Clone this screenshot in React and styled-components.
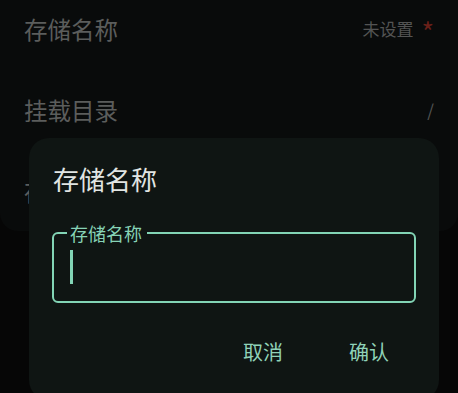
import React from "react";
import styled, { createGlobalStyle } from "styled-components";

const Global = createGlobalStyle`
  html, body { margin: 0; padding: 0; background: #080909; }
  body { font-family: "Noto Sans CJK SC", "Noto Sans", sans-serif; overflow: hidden; }
  * { box-sizing: border-box; }
`;

const Page = styled.div`
  width: 458px;
  height: 393px;
  position: relative;
  overflow: hidden;
  background: #080909;
`;

const Card = styled.div`
  margin-top: -12px;
  background: #0d0f0f;
  border-radius: 0 0 18px 18px;
  display: flex;
  flex-direction: column;
`;

const Row = styled.div`
  height: 81px;
  padding: 0 24px;
  display: flex;
  align-items: center;
  justify-content: space-between;
`;

const RowLabel = styled.span`
  font-size: 23.5px;
  color: #7a7c7b;
`;

const RowValue = styled.span`
  font-size: 17px;
  color: #6f7170;
  display: flex;
  align-items: center;
  gap: 8px;
`;

const Star = styled.span`
  color: #8e2b22;
  font-size: 27px;
  line-height: 1;
  margin-top: 6px;
`;

const Scrim = styled.div`
  position: absolute;
  inset: 0;
  background: rgba(0, 0, 0, 0.25);
`;

const Dialog = styled.div`
  position: absolute;
  left: 29px;
  top: 138px;
  width: 410px;
  height: 262px;
  background: #0f1513;
  border-radius: 20px;
  padding: 22px 23px 0 23px;
  display: flex;
  flex-direction: column;
`;

const Title = styled.div`
  font-size: 26px;
  color: #e1e5e3;
  line-height: 38px;
  padding-left: 1px;
`;

const Field = styled.fieldset`
  margin: 24px 0 0 0;
  height: 81px;
  border: 2.5px solid #82d4b5;
  border-radius: 6px;
  padding: 0 0 0 16px;
  position: relative;
`;

const Legend = styled.legend`
  font-size: 18px;
  color: #86d3b6;
  padding: 0 5px 0 3px;
  margin-left: -3px;
  line-height: 22px;
`;

const Caret = styled.div`
  width: 2.5px;
  height: 34px;
  background: #82d4b5;
  margin-top: 6px;
`;

const Actions = styled.div`
  display: flex;
  justify-content: flex-end;
  gap: 66px;
  padding-right: 27px;
  margin-top: 35px;
`;

const Btn = styled.span`
  font-size: 20px;
  color: #8fd2b8;
  line-height: 28px;
`;

export default function App() {
  return (
    <Page>
      <Global />
      <Card>
        <Row>
          <RowLabel>存储名称</RowLabel>
          <RowValue>
            未设置<Star>*</Star>
          </RowValue>
        </Row>
        <Row>
          <RowLabel>挂载目录</RowLabel>
          <RowValue>/</RowValue>
        </Row>
        <Row>
          <RowLabel>存储类型</RowLabel>
          <RowValue></RowValue>
        </Row>
      </Card>
      <Scrim />
      <Dialog>
        <Title>存储名称</Title>
        <Field>
          <Legend>存储名称</Legend>
          <Caret />
        </Field>
        <Actions>
          <Btn>取消</Btn>
          <Btn>确认</Btn>
        </Actions>
      </Dialog>
    </Page>
  );
}
